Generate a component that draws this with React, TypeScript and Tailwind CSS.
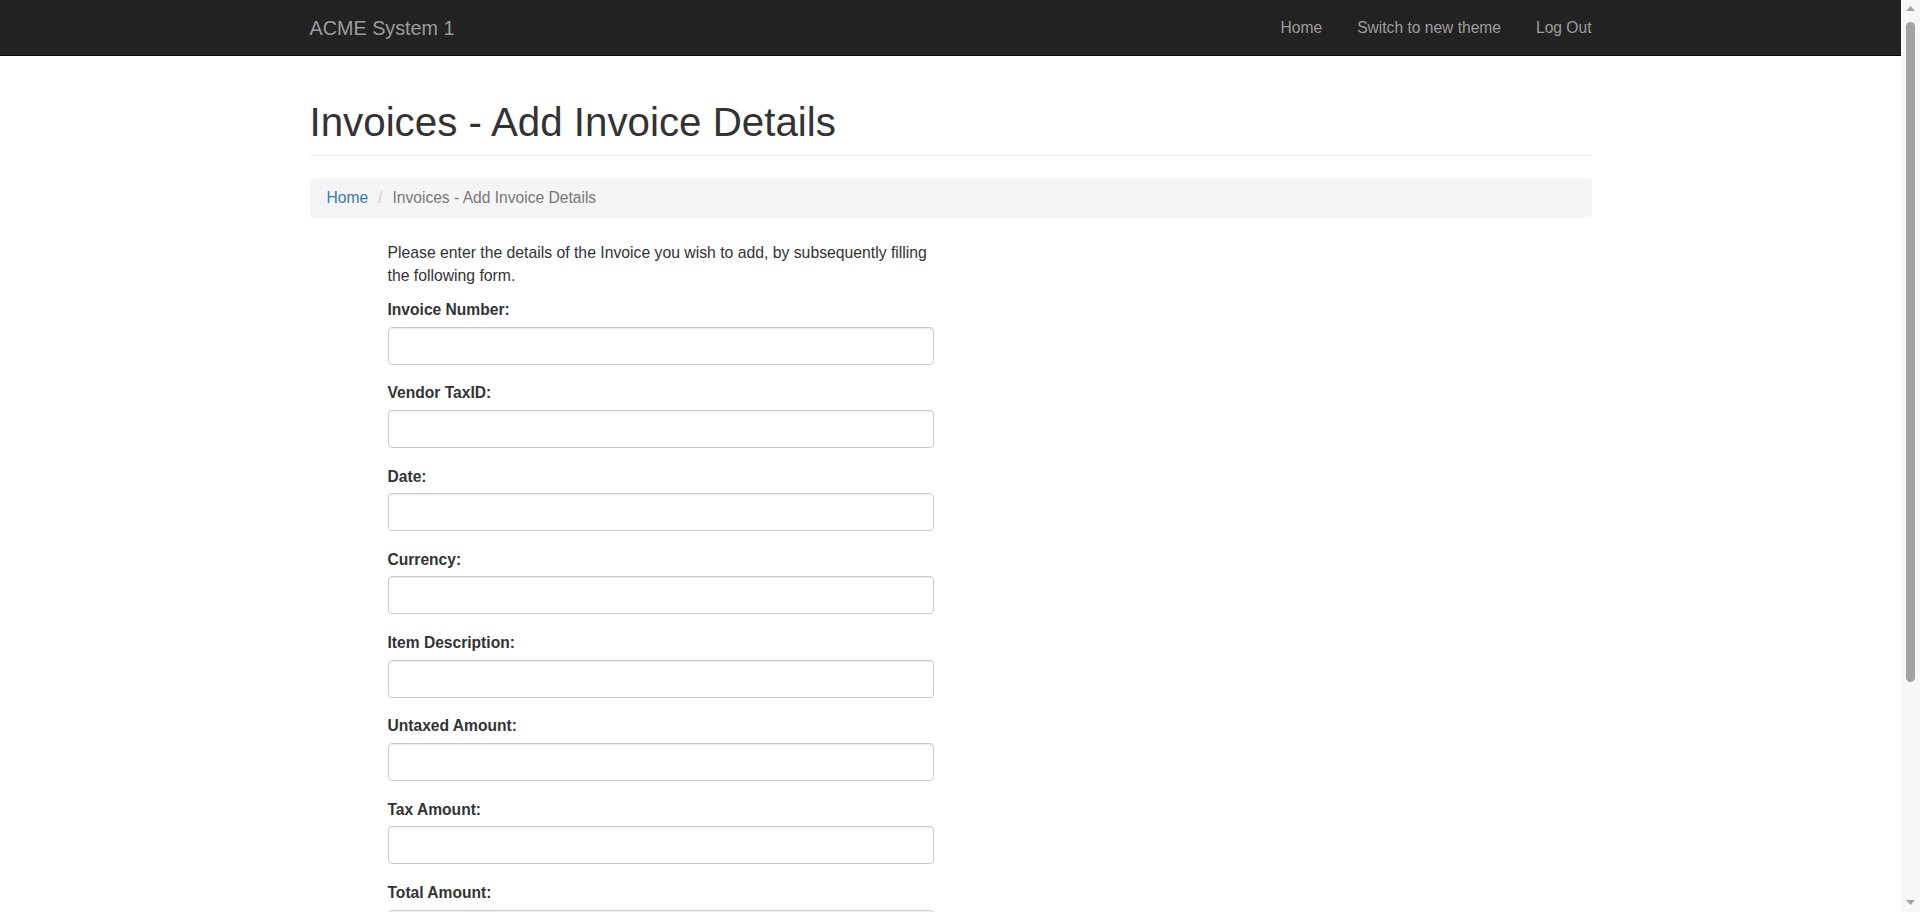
import React from 'react';

const FONT = { fontFamily: '"Liberation Sans", Arial, Helvetica, sans-serif' };

const NAV_LINKS = ['Home', 'Switch to new theme', 'Log Out'];

const FIELDS = [
    'Invoice Number:',
    'Vendor TaxID:',
    'Date:',
    'Currency:',
    'Item Description:',
    'Untaxed Amount:',
    'Tax Amount:',
    'Total Amount:',
];

const Navbar = () => {
    return (
        <div className="w-full bg-[#222222] border-b border-[#080808]">
            <div className="w-[1282px] mx-auto h-[55px] flex items-center justify-between">
                <a href="#" className="text-[19.8px] leading-[22px] text-[#9d9d9d]">
                    ACME System 1
                </a>
                <nav className="flex items-center gap-[35px]">
                    {NAV_LINKS.map((link) => (
                        <a key={link} href="#" className="text-[15.6px] leading-[22px] text-[#9d9d9d]">
                            {link}
                        </a>
                    ))}
                </nav>
            </div>
        </div>
    );
};

const FormGroup = ({ label }: { label: string }) => {
    return (
        <div className="mb-[16.8px]">
            <label className="block font-bold text-[15.6px] leading-[23px] mb-[5.5px]">{label}</label>
            <input
                type="text"
                className="block w-full h-[38px] px-[13px] border border-[#cccccc] rounded-[4px] bg-white shadow-[inset_0_1px_1px_rgba(0,0,0,0.075)] outline-none"
            />
        </div>
    );
};

// the browser scrollbar seen on the right of the screenshot
const Scrollbar = () => {
    return (
        <div className="sticky top-0 h-screen w-[19px] shrink-0 bg-[#f7f7f7] flex flex-col items-center">
            <svg width="9" height="5" viewBox="0 0 9 5" className="mt-[6px]">
                <path d="M4.5 0 L9 5 L0 5 Z" fill="#a3a3a3" />
            </svg>
            <div className="mt-[11px] w-[9px] h-[660px] rounded-full bg-[#a3a3a3]" />
            <svg width="9" height="5" viewBox="0 0 9 5" className="mt-auto mb-[7px]">
                <path d="M0 0 L9 0 L4.5 5 Z" fill="#a3a3a3" />
            </svg>
        </div>
    );
};

export default function App() {
    return (
        <div className="flex items-start bg-white text-[#333333]" style={FONT}>
            <div className="flex-1 min-w-0">
                <Navbar />
                <div className="w-[1282px] mx-auto">
                    <div className="mt-[45px] pb-[10px] border-b border-[#eeeeee]">
                        <h1 className="text-[40.3px] leading-[44px] font-normal">Invoices - Add Invoice Details</h1>
                    </div>
                    <div className="mt-[22px] h-[40px] px-[17px] flex items-center bg-[#f5f5f5] rounded-[4px] text-[15.6px]">
                        <a href="#" className="text-[#337ab7]">
                            Home
                        </a>
                        <span className="text-[#cccccc] px-[10px]">/</span>
                        <span className="text-[#777777]">Invoices - Add Invoice Details</span>
                    </div>
                    <div className="ml-[78px] w-[546px] mt-[23px] pb-[40px]">
                        <p className="text-[15.75px] leading-[23px] mb-[11px]">
                            Please enter the details of the Invoice you wish to add, by subsequently filling the
                            following form.
                        </p>
                        {FIELDS.map((f) => (
                            <FormGroup key={f} label={f} />
                        ))}
                    </div>
                </div>
            </div>
            <Scrollbar />
        </div>
    );
}
